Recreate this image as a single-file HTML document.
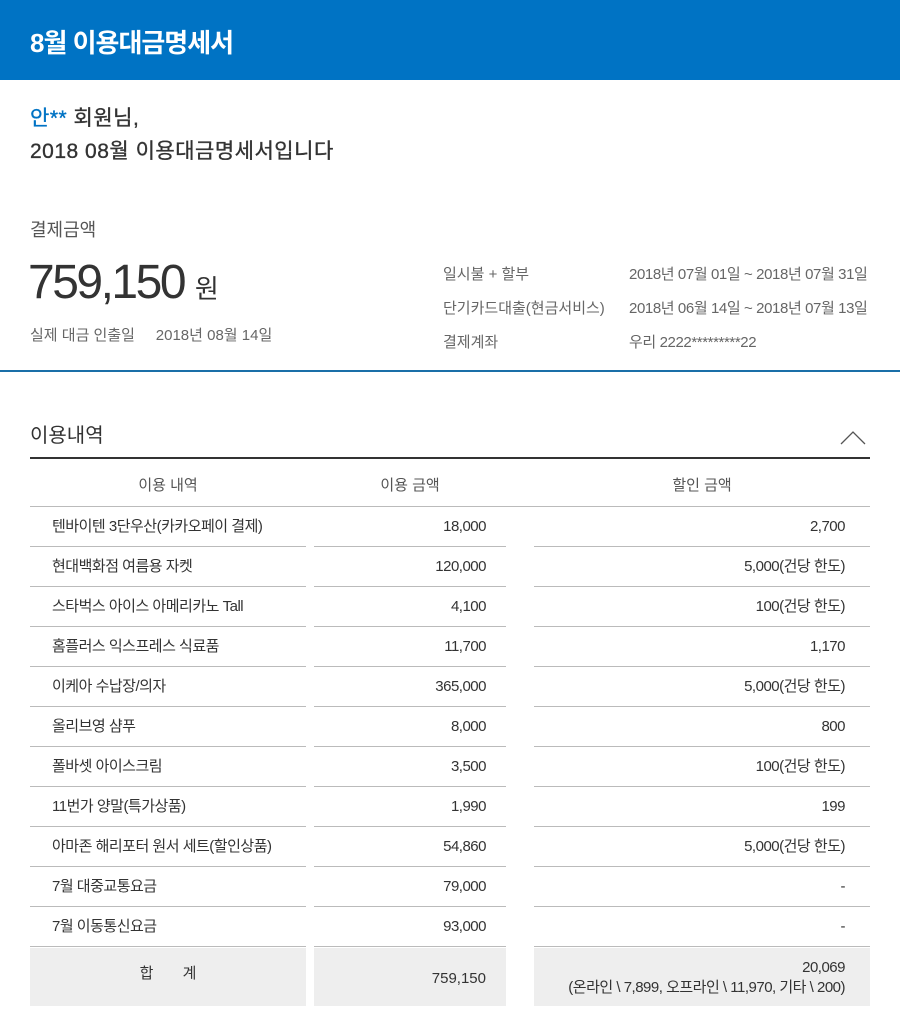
<!DOCTYPE html>
<html><head><meta charset="utf-8"><style>
*{margin:0;padding:0;box-sizing:border-box}
body{width:900px;height:1030px;background:#fff;font-family:"Liberation Sans","Noto Sans CJK KR",sans-serif;color:#333;position:relative;overflow:hidden}
.a{position:absolute;white-space:nowrap}
.hdr{position:absolute;left:0;top:0;width:900px;height:80px;background:#0073c4}
.cell{position:absolute;height:40px;line-height:40px;font-size:15px;color:#333;border-bottom:1px solid #bbb;letter-spacing:-0.5px}
.c1{left:30px;width:276px;padding-left:22px}
.c2{left:314px;width:192px;text-align:right;padding-right:20px}
.c3{left:534px;width:336px;text-align:right;padding-right:25px}
.g{font-size:21px;color:#333;-webkit-text-stroke:0.35px #333;letter-spacing:0.5px}
</style></head><body>
<div class="hdr"></div>
<div class="a" style="left:30px;top:23px;font-size:26px;font-weight:bold;color:#fff;letter-spacing:-1px">8월 이용대금명세서</div>
<div class="a g" style="left:30px;top:102px"><span style="color:#0073c4;-webkit-text-stroke:0.35px #0073c4">안**</span> 회원님,</div>
<div class="a g" style="left:30px;top:135px">2018 08월 이용대금명세서입니다</div>
<div class="a" style="left:30px;top:216px;font-size:18px;color:#555">결제금액</div>
<div class="a" style="left:28px;top:255px;font-size:48px;letter-spacing:-2.5px">759,150 <span style="font-size:26px;letter-spacing:0">원</span></div>
<div class="a" style="left:30px;top:324px;font-size:15px;color:#666">실제 대금 인출일 &nbsp;&nbsp;&nbsp; 2018년 08월 14일</div>
<div class="a" style="left:443px;top:258px;font-size:15px;color:#666;line-height:34px">일시불 + 할부<br>단기카드대출(현금서비스)<br>결제계좌</div>
<div class="a" style="left:629px;top:258px;font-size:15px;color:#666;line-height:34px;letter-spacing:-0.4px">2018년 07월 01일 ~ 2018년 07월 31일<br>2018년 06월 14일 ~ 2018년 07월 13일<br>우리 2222*********22</div>
<div class="a" style="left:0;top:370px;width:900px;height:2px;background:#1a6fa8"></div>
<div class="a" style="left:30px;top:419px;font-size:20px">이용내역</div>
<svg class="a" style="left:840px;top:430px" width="26" height="16"><path d="M1 14 L13 2 L25 14" fill="none" stroke="#555" stroke-width="1.3"/></svg>
<div class="a" style="left:30px;top:457px;width:840px;height:2px;background:#333"></div>
<div class="a" style="left:30px;top:459px;width:840px;height:48px;border-bottom:1px solid #bbb"></div>
<div class="a" style="left:30px;top:474px;width:276px;text-align:center;font-size:15px;color:#555">이용 내역</div>
<div class="a" style="left:314px;top:474px;width:192px;text-align:center;font-size:15px;color:#555">이용 금액</div>
<div class="a" style="left:534px;top:474px;width:336px;text-align:center;font-size:15px;color:#555">할인 금액</div>
<div class="a" style="left:30px;top:948px;width:276px;height:58px;background:#eee;text-align:center;line-height:52px;font-size:15px">합 &nbsp;&nbsp;&nbsp;&nbsp;&nbsp; 계</div>
<div class="a" style="left:314px;top:948px;width:192px;height:58px;background:#eee;text-align:right;padding-right:20px;line-height:62px;font-size:15px">759,150</div>
<div class="a" style="left:534px;top:948px;width:336px;height:58px;background:#eee;text-align:right;padding-right:25px;padding-top:10px;line-height:20px;font-size:15px;letter-spacing:-0.5px">20,069<br>(온라인 \ 7,899, 오프라인 \ 11,970, 기타 \ 200)</div>
<div class="cell c1" style="top:507px">텐바이텐 3단우산(카카오페이 결제)</div><div class="cell c2" style="top:507px">18,000</div><div class="cell c3" style="top:507px">2,700</div>
<div class="cell c1" style="top:547px">현대백화점 여름용 자켓</div><div class="cell c2" style="top:547px">120,000</div><div class="cell c3" style="top:547px">5,000(건당 한도)</div>
<div class="cell c1" style="top:587px">스타벅스 아이스 아메리카노 Tall</div><div class="cell c2" style="top:587px">4,100</div><div class="cell c3" style="top:587px">100(건당 한도)</div>
<div class="cell c1" style="top:627px">홈플러스 익스프레스 식료품</div><div class="cell c2" style="top:627px">11,700</div><div class="cell c3" style="top:627px">1,170</div>
<div class="cell c1" style="top:667px">이케아 수납장/의자</div><div class="cell c2" style="top:667px">365,000</div><div class="cell c3" style="top:667px">5,000(건당 한도)</div>
<div class="cell c1" style="top:707px">올리브영 샴푸</div><div class="cell c2" style="top:707px">8,000</div><div class="cell c3" style="top:707px">800</div>
<div class="cell c1" style="top:747px">폴바셋 아이스크림</div><div class="cell c2" style="top:747px">3,500</div><div class="cell c3" style="top:747px">100(건당 한도)</div>
<div class="cell c1" style="top:787px">11번가 양말(특가상품)</div><div class="cell c2" style="top:787px">1,990</div><div class="cell c3" style="top:787px">199</div>
<div class="cell c1" style="top:827px">아마존 해리포터 원서 세트(할인상품)</div><div class="cell c2" style="top:827px">54,860</div><div class="cell c3" style="top:827px">5,000(건당 한도)</div>
<div class="cell c1" style="top:867px">7월 대중교통요금</div><div class="cell c2" style="top:867px">79,000</div><div class="cell c3" style="top:867px">-</div>
<div class="cell c1" style="top:907px">7월 이동통신요금</div><div class="cell c2" style="top:907px">93,000</div><div class="cell c3" style="top:907px">-</div>
</body></html>
